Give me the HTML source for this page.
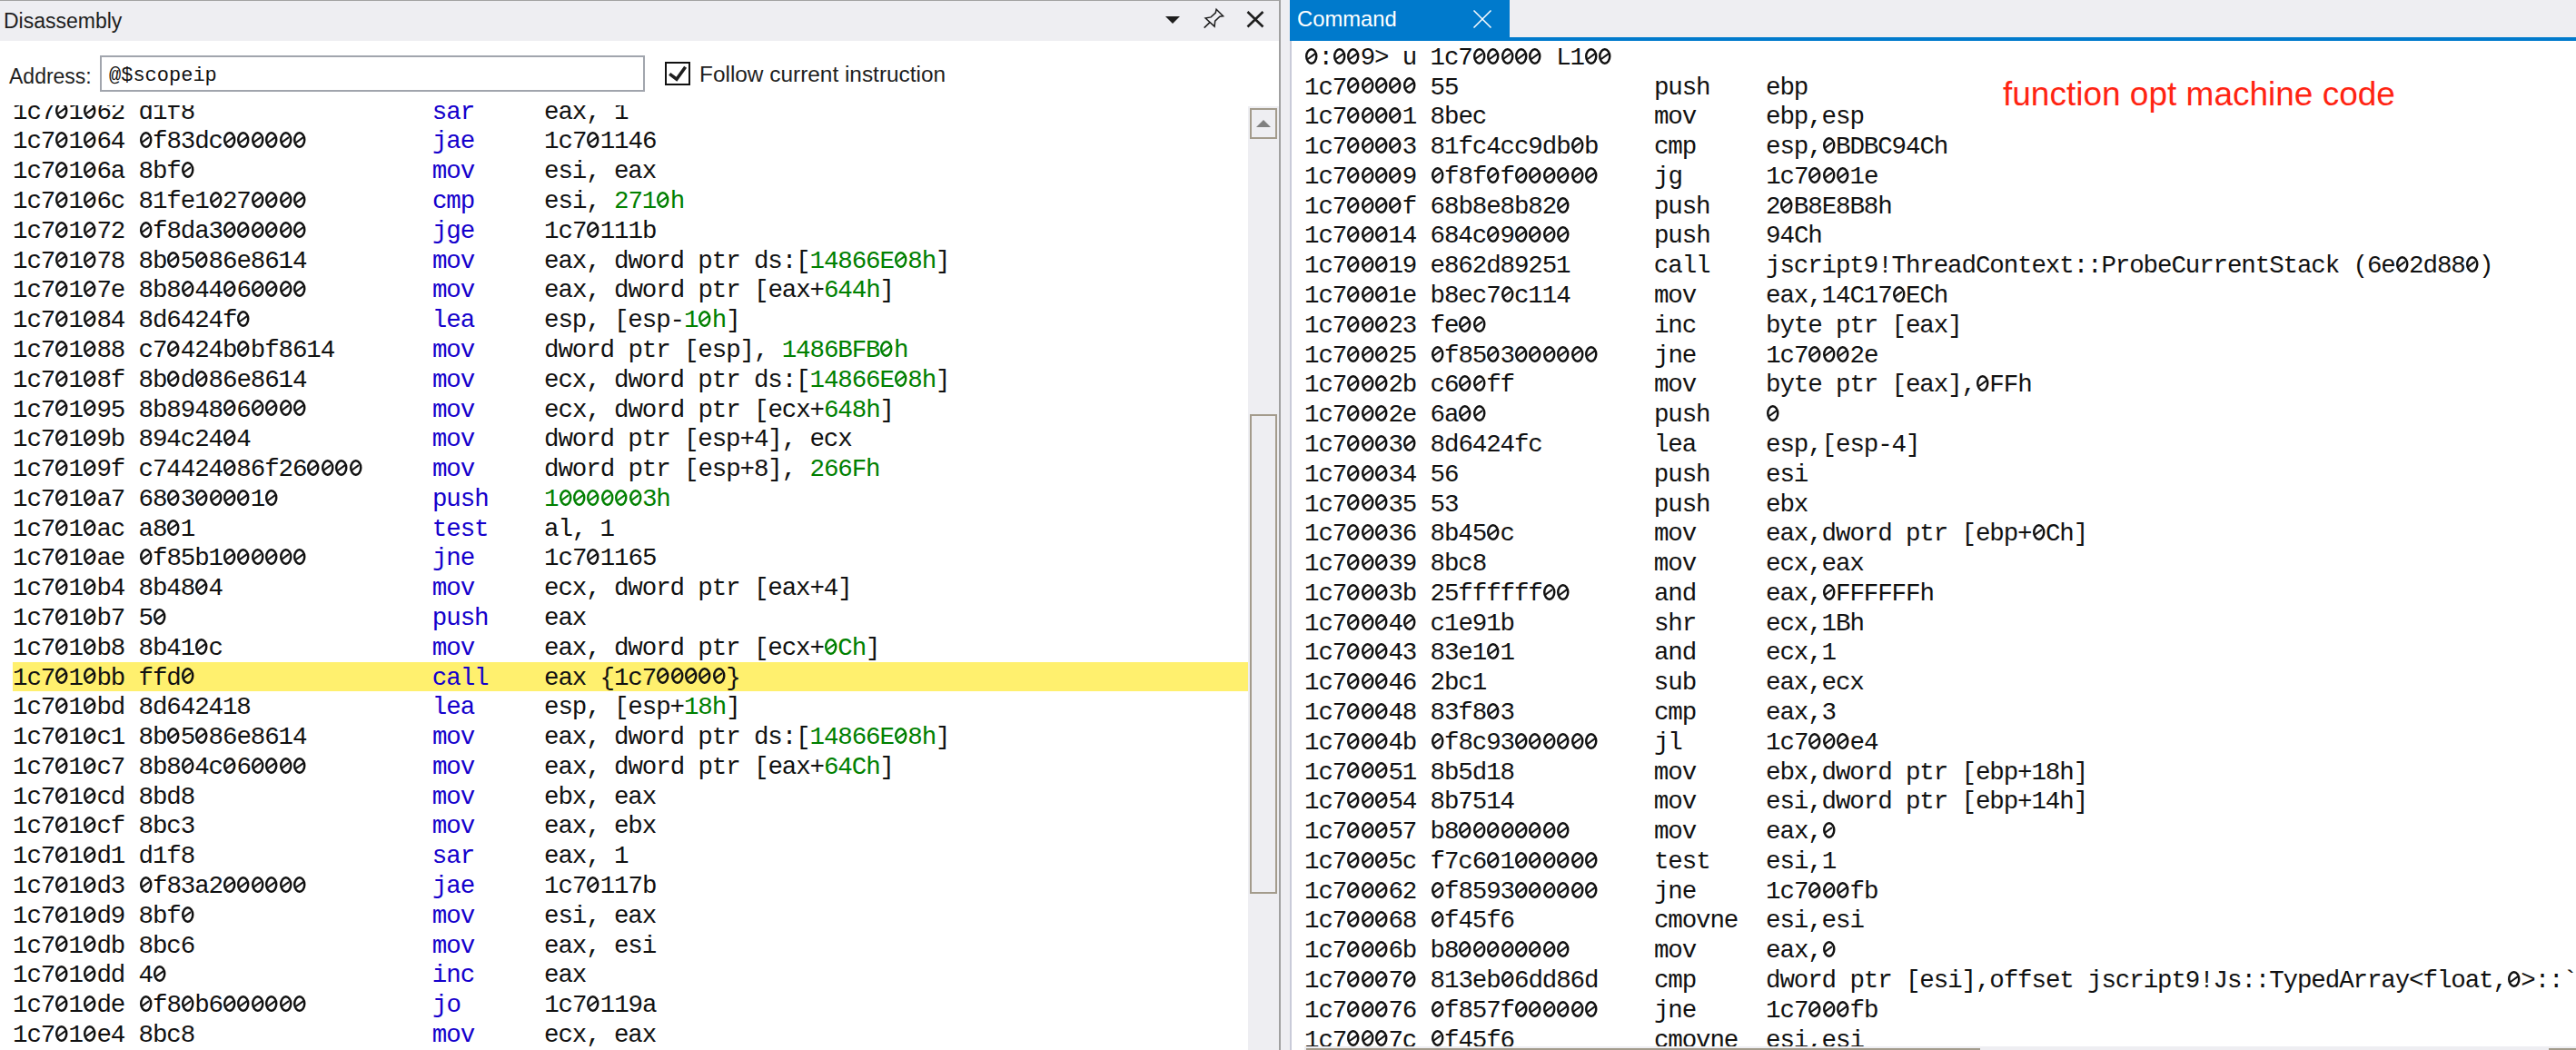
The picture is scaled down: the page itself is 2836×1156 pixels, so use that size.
<!DOCTYPE html>
<html><head><meta charset="utf-8">
<style>
html,body{margin:0;padding:0;}
body{width:2836px;height:1156px;overflow:hidden;position:relative;background:#fff;font-family:"Liberation Sans",sans-serif;}
.abs{position:absolute;}
.mono{font-family:"Liberation Mono",monospace;white-space:pre;}
/* left panel */
#ltop{left:0;top:0;width:1408px;height:1px;background:#a2a2a2;}
#ltitle{left:0;top:1px;width:1408px;height:44px;background:#eeeef2;}
#ttl{left:4px;top:10px;font-size:23px;color:#1e1e1e;white-space:pre;}
#vline{left:1408px;top:0;width:2px;height:1156px;background:#a0a0a0;}
#gap{left:1410px;top:0;width:10px;height:1156px;background:#eeeef2;}
#addrlbl{left:10px;top:70.8px;font-size:23px;color:#1e1e1e;}
#addrbox{left:110px;top:61px;width:596px;height:36px;border:2px solid #a1a5ad;background:#fff;}
#addrtxt{left:120px;top:71px;font-size:22px;letter-spacing:-0.0px;color:#111;}
#chk{left:732px;top:68px;width:24px;height:22px;border:2px solid #111;}
#follow{left:770px;top:68px;font-size:24.4px;color:#1e1e1e;white-space:pre;}
#dview{left:0;top:116px;width:1374px;height:1040px;overflow:hidden;}
#hl{left:14px;width:1360px;height:32.5px;background:#fff06e;}
#dtext{left:14px;color:#111;}
#dtext b{font-weight:normal;color:#1400cc;}
#dtext i{font-style:normal;color:#008000;}
#dtrack{left:1374px;top:117px;width:34px;height:1039px;background:#eeeef2;}
#upbox{left:1376px;top:119px;width:26px;height:30px;border:2px solid #a39b8c;}
#thumb{left:1376px;top:456px;width:26px;height:524px;border:2px solid #a39b8c;}
/* right panel */
#rhead{left:1420px;top:0;width:1416px;height:45px;background:#eeeef2;}
#bline{left:1420px;top:41px;width:1416px;height:4px;background:#007acc;}
#tab{left:1420px;top:0;width:242px;height:45px;background:#007acc;}
#tabtxt{left:1428px;top:7px;font-size:23.8px;color:#fff;white-space:pre;}
#lborder{left:1420px;top:45px;width:2px;height:1111px;background:#c9cbd9;}
#cview{left:1422px;top:45px;width:1414px;height:1107px;overflow:hidden;background:#fff;}
#ctext{left:14px;color:#111;}
#note{left:2205px;top:82.6px;font-size:37px;color:#ff2412;white-space:pre;}
#htrack{left:1436px;top:1152px;width:1400px;height:4px;background:#eeeef2;}
#hthumb{left:1438px;top:1154px;width:742px;height:2px;background:#a39b8c;}
u{text-decoration:none;position:relative;-webkit-text-fill-color:transparent;}
u::before{content:'';position:absolute;left:1.0px;top:4.9px;width:26.6px;height:36px;box-sizing:border-box;border:5px solid currentColor;border-radius:50%;transform:scale(0.5);transform-origin:0 0;}
u::after{content:'';position:absolute;left:2.7px;top:12.85px;width:10px;height:2.3px;background:currentColor;transform:rotate(-36deg);}
</style></head>
<body>
<div id="ltop" class="abs"></div>
<div id="ltitle" class="abs"></div>
<div id="ttl" class="abs">Disassembly</div>
<svg class="abs" style="left:1280px;top:14px" width="22" height="16" viewBox="0 0 22 16"><path d="M3 4 L19 4 L11 12 Z" fill="#1e1e1e"/></svg>
<svg class="abs" style="left:1320px;top:6px" width="32" height="30" viewBox="0 0 32 30"><path d="M5.7 24.6 L11.7 18.9 M19.1 4.3 L26.6 11.7 L22.9 12.3 L17.7 17.1 L17.1 23.1 L7.1 14 L13.1 12.9 L18.3 8 Z" fill="none" stroke="#1e1e1e" stroke-width="1.5" stroke-linejoin="miter"/></svg>
<svg class="abs" style="left:1368px;top:8px" width="28" height="26" viewBox="0 0 28 26"><path d="M5.5 5 L22.5 21.5 M22.5 5 L5.5 21.5" stroke="#1e1e1e" stroke-width="2.6"/></svg>
<div id="addrlbl" class="abs">Address:</div>
<div id="addrbox" class="abs"></div>
<div id="addrtxt" class="abs mono">@$scopeip</div>
<div id="chk" class="abs"></div>
<svg class="abs" style="left:732px;top:68px" width="28" height="26" viewBox="0 0 28 26"><path d="M5.2 13.4 L12.9 19.3 L22.6 5.8" fill="none" stroke="#1e1e1e" stroke-width="3.6" stroke-linejoin="miter"/></svg>
<div id="follow" class="abs">Follow current instruction</div>
<div id="dview" class="abs">
<div id="hl" class="abs" style="top:612.50px"></div>
<div id="dtext" class="abs mono" style="top:-8.3px;font-size:27.5px;line-height:32.78px;letter-spacing:-1.110px">1c7<u>0</u>1<u>0</u>62 d1f8                 <b>sar     </b>eax, 1
1c7<u>0</u>1<u>0</u>64 <u>0</u>f83dc<u>0</u><u>0</u><u>0</u><u>0</u><u>0</u><u>0</u>         <b>jae     </b>1c7<u>0</u>1146
1c7<u>0</u>1<u>0</u>6a 8bf<u>0</u>                 <b>mov     </b>esi, eax
1c7<u>0</u>1<u>0</u>6c 81fe1<u>0</u>27<u>0</u><u>0</u><u>0</u><u>0</u>         <b>cmp     </b>esi, <i>271<u>0</u>h</i>
1c7<u>0</u>1<u>0</u>72 <u>0</u>f8da3<u>0</u><u>0</u><u>0</u><u>0</u><u>0</u><u>0</u>         <b>jge     </b>1c7<u>0</u>111b
1c7<u>0</u>1<u>0</u>78 8b<u>0</u>5<u>0</u>86e8614         <b>mov     </b>eax, dword ptr ds:[<i>14866E<u>0</u>8h</i>]
1c7<u>0</u>1<u>0</u>7e 8b8<u>0</u>44<u>0</u>6<u>0</u><u>0</u><u>0</u><u>0</u>         <b>mov     </b>eax, dword ptr [eax+<i>644h</i>]
1c7<u>0</u>1<u>0</u>84 8d6424f<u>0</u>             <b>lea     </b>esp, [esp-<i>1<u>0</u>h</i>]
1c7<u>0</u>1<u>0</u>88 c7<u>0</u>424b<u>0</u>bf8614       <b>mov     </b>dword ptr [esp], <i>1486BFB<u>0</u>h</i>
1c7<u>0</u>1<u>0</u>8f 8b<u>0</u>d<u>0</u>86e8614         <b>mov     </b>ecx, dword ptr ds:[<i>14866E<u>0</u>8h</i>]
1c7<u>0</u>1<u>0</u>95 8b8948<u>0</u>6<u>0</u><u>0</u><u>0</u><u>0</u>         <b>mov     </b>ecx, dword ptr [ecx+<i>648h</i>]
1c7<u>0</u>1<u>0</u>9b 894c24<u>0</u>4             <b>mov     </b>dword ptr [esp+4], ecx
1c7<u>0</u>1<u>0</u>9f c74424<u>0</u>86f26<u>0</u><u>0</u><u>0</u><u>0</u>     <b>mov     </b>dword ptr [esp+8], <i>266Fh</i>
1c7<u>0</u>1<u>0</u>a7 68<u>0</u>3<u>0</u><u>0</u><u>0</u><u>0</u>1<u>0</u>           <b>push    </b><i>1<u>0</u><u>0</u><u>0</u><u>0</u><u>0</u><u>0</u>3h</i>
1c7<u>0</u>1<u>0</u>ac a8<u>0</u>1                 <b>test    </b>al, 1
1c7<u>0</u>1<u>0</u>ae <u>0</u>f85b1<u>0</u><u>0</u><u>0</u><u>0</u><u>0</u><u>0</u>         <b>jne     </b>1c7<u>0</u>1165
1c7<u>0</u>1<u>0</u>b4 8b48<u>0</u>4               <b>mov     </b>ecx, dword ptr [eax+4]
1c7<u>0</u>1<u>0</u>b7 5<u>0</u>                   <b>push    </b>eax
1c7<u>0</u>1<u>0</u>b8 8b41<u>0</u>c               <b>mov     </b>eax, dword ptr [ecx+<i><u>0</u>Ch</i>]
1c7<u>0</u>1<u>0</u>bb ffd<u>0</u>                 <b>call    </b>eax {1c7<u>0</u><u>0</u><u>0</u><u>0</u><u>0</u>}
1c7<u>0</u>1<u>0</u>bd 8d642418             <b>lea     </b>esp, [esp+<i>18h</i>]
1c7<u>0</u>1<u>0</u>c1 8b<u>0</u>5<u>0</u>86e8614         <b>mov     </b>eax, dword ptr ds:[<i>14866E<u>0</u>8h</i>]
1c7<u>0</u>1<u>0</u>c7 8b8<u>0</u>4c<u>0</u>6<u>0</u><u>0</u><u>0</u><u>0</u>         <b>mov     </b>eax, dword ptr [eax+<i>64Ch</i>]
1c7<u>0</u>1<u>0</u>cd 8bd8                 <b>mov     </b>ebx, eax
1c7<u>0</u>1<u>0</u>cf 8bc3                 <b>mov     </b>eax, ebx
1c7<u>0</u>1<u>0</u>d1 d1f8                 <b>sar     </b>eax, 1
1c7<u>0</u>1<u>0</u>d3 <u>0</u>f83a2<u>0</u><u>0</u><u>0</u><u>0</u><u>0</u><u>0</u>         <b>jae     </b>1c7<u>0</u>117b
1c7<u>0</u>1<u>0</u>d9 8bf<u>0</u>                 <b>mov     </b>esi, eax
1c7<u>0</u>1<u>0</u>db 8bc6                 <b>mov     </b>eax, esi
1c7<u>0</u>1<u>0</u>dd 4<u>0</u>                   <b>inc     </b>eax
1c7<u>0</u>1<u>0</u>de <u>0</u>f8<u>0</u>b6<u>0</u><u>0</u><u>0</u><u>0</u><u>0</u><u>0</u>         <b>jo      </b>1c7<u>0</u>119a
1c7<u>0</u>1<u>0</u>e4 8bc8                 <b>mov     </b>ecx, eax</div>
</div>
<div id="dtrack" class="abs"></div>
<div id="upbox" class="abs"></div>
<svg class="abs" style="left:1376px;top:119px" width="30" height="34" viewBox="0 0 30 34"><path d="M7 21 L15 13 L23 21 Z" fill="#808080"/></svg>
<div id="thumb" class="abs"></div>
<div id="vline" class="abs"></div>
<div id="gap" class="abs"></div>

<div id="rhead" class="abs"></div>
<div id="bline" class="abs"></div>
<div id="tab" class="abs"></div>
<div id="tabtxt" class="abs">Command</div>
<svg class="abs" style="left:1618px;top:8px" width="28" height="28" viewBox="0 0 28 28"><path d="M4.5 3.5 L23.5 22.5 M23.5 3.5 L4.5 22.5" stroke="#fff" stroke-width="1.5"/></svg>
<div id="cview" class="abs">
<div id="ctext" class="abs mono" style="top:2.8px;font-size:27.5px;line-height:32.78px;letter-spacing:-1.110px"><u>0</u>:<u>0</u><u>0</u>9&gt; u 1c7<u>0</u><u>0</u><u>0</u><u>0</u><u>0</u> L1<u>0</u><u>0</u>
1c7<u>0</u><u>0</u><u>0</u><u>0</u><u>0</u> 55              push    ebp
1c7<u>0</u><u>0</u><u>0</u><u>0</u>1 8bec            mov     ebp,esp
1c7<u>0</u><u>0</u><u>0</u><u>0</u>3 81fc4cc9db<u>0</u>b    cmp     esp,<u>0</u>BDBC94Ch
1c7<u>0</u><u>0</u><u>0</u><u>0</u>9 <u>0</u>f8f<u>0</u>f<u>0</u><u>0</u><u>0</u><u>0</u><u>0</u><u>0</u>    jg      1c7<u>0</u><u>0</u><u>0</u>1e
1c7<u>0</u><u>0</u><u>0</u><u>0</u>f 68b8e8b82<u>0</u>      push    2<u>0</u>B8E8B8h
1c7<u>0</u><u>0</u><u>0</u>14 684c<u>0</u>9<u>0</u><u>0</u><u>0</u><u>0</u>      push    94Ch
1c7<u>0</u><u>0</u><u>0</u>19 e862d89251      call    jscript9!ThreadContext::ProbeCurrentStack (6e<u>0</u>2d88<u>0</u>)
1c7<u>0</u><u>0</u><u>0</u>1e b8ec7<u>0</u>c114      mov     eax,14C17<u>0</u>ECh
1c7<u>0</u><u>0</u><u>0</u>23 fe<u>0</u><u>0</u>            inc     byte ptr [eax]
1c7<u>0</u><u>0</u><u>0</u>25 <u>0</u>f85<u>0</u>3<u>0</u><u>0</u><u>0</u><u>0</u><u>0</u><u>0</u>    jne     1c7<u>0</u><u>0</u><u>0</u>2e
1c7<u>0</u><u>0</u><u>0</u>2b c6<u>0</u><u>0</u>ff          mov     byte ptr [eax],<u>0</u>FFh
1c7<u>0</u><u>0</u><u>0</u>2e 6a<u>0</u><u>0</u>            push    <u>0</u>
1c7<u>0</u><u>0</u><u>0</u>3<u>0</u> 8d6424fc        lea     esp,[esp-4]
1c7<u>0</u><u>0</u><u>0</u>34 56              push    esi
1c7<u>0</u><u>0</u><u>0</u>35 53              push    ebx
1c7<u>0</u><u>0</u><u>0</u>36 8b45<u>0</u>c          mov     eax,dword ptr [ebp+<u>0</u>Ch]
1c7<u>0</u><u>0</u><u>0</u>39 8bc8            mov     ecx,eax
1c7<u>0</u><u>0</u><u>0</u>3b 25ffffff<u>0</u><u>0</u>      and     eax,<u>0</u>FFFFFFh
1c7<u>0</u><u>0</u><u>0</u>4<u>0</u> c1e91b          shr     ecx,1Bh
1c7<u>0</u><u>0</u><u>0</u>43 83e1<u>0</u>1          and     ecx,1
1c7<u>0</u><u>0</u><u>0</u>46 2bc1            sub     eax,ecx
1c7<u>0</u><u>0</u><u>0</u>48 83f8<u>0</u>3          cmp     eax,3
1c7<u>0</u><u>0</u><u>0</u>4b <u>0</u>f8c93<u>0</u><u>0</u><u>0</u><u>0</u><u>0</u><u>0</u>    jl      1c7<u>0</u><u>0</u><u>0</u>e4
1c7<u>0</u><u>0</u><u>0</u>51 8b5d18          mov     ebx,dword ptr [ebp+18h]
1c7<u>0</u><u>0</u><u>0</u>54 8b7514          mov     esi,dword ptr [ebp+14h]
1c7<u>0</u><u>0</u><u>0</u>57 b8<u>0</u><u>0</u><u>0</u><u>0</u><u>0</u><u>0</u><u>0</u><u>0</u>      mov     eax,<u>0</u>
1c7<u>0</u><u>0</u><u>0</u>5c f7c6<u>0</u>1<u>0</u><u>0</u><u>0</u><u>0</u><u>0</u><u>0</u>    test    esi,1
1c7<u>0</u><u>0</u><u>0</u>62 <u>0</u>f8593<u>0</u><u>0</u><u>0</u><u>0</u><u>0</u><u>0</u>    jne     1c7<u>0</u><u>0</u><u>0</u>fb
1c7<u>0</u><u>0</u><u>0</u>68 <u>0</u>f45f6          cmovne  esi,esi
1c7<u>0</u><u>0</u><u>0</u>6b b8<u>0</u><u>0</u><u>0</u><u>0</u><u>0</u><u>0</u><u>0</u><u>0</u>      mov     eax,<u>0</u>
1c7<u>0</u><u>0</u><u>0</u>7<u>0</u> 813eb<u>0</u>6dd86d    cmp     dword ptr [esi],offset jscript9!Js::TypedArray&lt;float,<u>0</u>&gt;::`vftable&#x27;
1c7<u>0</u><u>0</u><u>0</u>76 <u>0</u>f857f<u>0</u><u>0</u><u>0</u><u>0</u><u>0</u><u>0</u>    jne     1c7<u>0</u><u>0</u><u>0</u>fb
1c7<u>0</u><u>0</u><u>0</u>7c <u>0</u>f45f6          cmovne  esi,esi</div>
</div>
<div id="lborder" class="abs"></div>
<div id="note" class="abs">function opt machine code</div>
<div id="htrack" class="abs"></div>
<div id="hthumb" class="abs"></div>
<div class="abs" style="left:2806px;top:1154px;width:30px;height:2px;background:#a39b8c"></div>
</body></html>
